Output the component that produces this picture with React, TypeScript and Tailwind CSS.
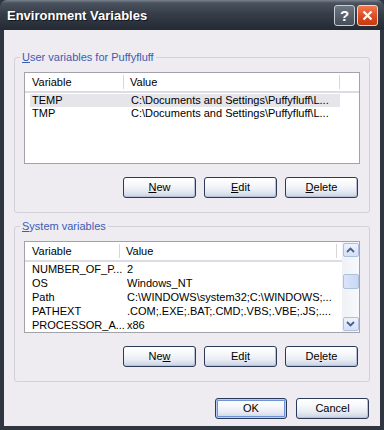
import React from "react";

function Btn({ children, def }: { children: React.ReactNode; def?: boolean }) {
  return (
    <div
      className={
        "h-[21px] rounded-[3px] border border-[#2c3a58] bg-[linear-gradient(to_bottom,#ffffff_0%,#f7f8fb_35%,#e6eaf2_70%,#c8d2e4_100%)] flex items-center justify-center text-[11px] leading-none text-black " +
        (def
          ? "w-[72px] shadow-[inset_0_0_0_1px_#b6cdf2,inset_0_0_0_2px_#6e93db]"
          : "w-[73px] shadow-[inset_-1px_-1px_0_0_#b8c2d6]")
      }
    >
      {children}
    </div>
  );
}

function Legend({ children }: { children: React.ReactNode }) {
  return (
    <legend className="ml-[-4px] px-[2px] text-[11px] leading-[14px] text-[#3c5bb5]">
      {children}
    </legend>
  );
}

function HeaderSep() {
  return <div className="w-[2px] h-[14px] border-l border-[#d6d6da] bg-white self-center" />;
}

function Chevron({ up }: { up?: boolean }) {
  return (
    <svg width="9" height="6" viewBox="0 0 9 6">
      <path
        d={up ? "M1 5 L4.5 1.5 L8 5" : "M1 1 L4.5 4.5 L8 1"}
        fill="none"
        stroke="#4c5f86"
        strokeWidth="1.8"
      />
    </svg>
  );
}

function ScrollBtn({ up }: { up?: boolean }) {
  return (
    <div className="h-[14px] w-[16px] rounded-[2px] border border-[#aebfdf] bg-[linear-gradient(to_bottom,#eef3fd,#d3e0f8)] flex items-center justify-center">
      <Chevron up={up} />
    </div>
  );
}

export default function App() {
  const sysRows: [string, string][] = [
    ["NUMBER_OF_P...", "2"],
    ["OS", "Windows_NT"],
    ["Path", "C:\\WINDOWS\\system32;C:\\WINDOWS;..."],
    ["PATHEXT", ".COM;.EXE;.BAT;.CMD;.VBS;.VBE;.JS;...."],
    ["PROCESSOR_A...", "x86"],
  ];
  return (
    <div className="w-[384px] h-[430px] bg-[#2f3640] flex flex-col font-['Liberation_Sans',Arial,sans-serif] overflow-hidden">
      {/* Title bar */}
      <div className="h-[30px] shrink-0 rounded-t-[7px] bg-[linear-gradient(to_bottom,#7a828e_0%,#4a525e_10%,#363e4a_45%,#2a313b_80%,#232a33_100%)] flex items-center pl-[7px] pr-[6px]">
        <div className="flex-1 text-white font-bold text-[13px] leading-none [text-shadow:1px_1px_0_#12161c]">
          Environment Variables
        </div>
        <div className="flex gap-[2px]">
          <div className="w-[21px] h-[21px] rounded-[3px] border border-[#c9ced6] bg-[linear-gradient(to_bottom,#6e7682,#454d59)] flex items-center justify-center text-white font-bold text-[15px] leading-none">
            ?
          </div>
          <div className="w-[21px] h-[21px] rounded-[3px] border border-[#e8d6d0] bg-[linear-gradient(to_bottom,#ee7a52,#d8491f_60%,#c53a14)] flex items-center justify-center">
            <svg width="11" height="11" viewBox="0 0 11 11">
              <path d="M1.5 1.5 L9.5 9.5 M9.5 1.5 L1.5 9.5" stroke="white" strokeWidth="2.2" />
            </svg>
          </div>
        </div>
      </div>

      {/* Body */}
      <div className="flex-1 mx-[4px] mb-[4px] bg-[#eeecf0] flex flex-col text-[11px] text-black">
        {/* User variables */}
        <fieldset className="mx-[10px] mt-[20px] border border-[#d2d0d8] rounded-[3px] px-[9px] pb-[14px]">
          <Legend>
            <span className="underline">U</span>ser variables for Puffyfluff
          </Legend>
          <div className="mt-[8px] h-[92px] border border-[#a2a2aa] bg-white flex flex-col">
            <div className="h-[20px] shrink-0 flex items-stretch border-b-[2px] border-[#dcdce2]">
              <div className="w-[98px] pl-[7px] flex items-center">Variable</div>
              <HeaderSep />
              <div className="w-[214px] pl-[5px] flex items-center">Value</div>
              <HeaderSep />
            </div>
            <div className="pt-[1px] flex flex-col">
              <div className="ml-[5px] w-[310px] h-[13px] bg-[#e6e5ea] flex items-center">
                <div className="w-[94px] pl-[2px]">TEMP</div>
                <div className="pl-[7px] whitespace-nowrap">C:\Documents and Settings\Puffyfluff\L...</div>
              </div>
              <div className="ml-[5px] w-[310px] h-[13px] flex items-center">
                <div className="w-[94px] pl-[2px]">TMP</div>
                <div className="pl-[7px] whitespace-nowrap">C:\Documents and Settings\Puffyfluff\L...</div>
              </div>
            </div>
          </div>
          <div className="mt-[13px] flex justify-end gap-[8px] pr-[2px]">
            <Btn>
              <span className="underline">N</span>ew
            </Btn>
            <Btn>
              <span className="underline">E</span>dit
            </Btn>
            <Btn>
              <span className="underline">D</span>elete
            </Btn>
          </div>
        </fieldset>

        {/* System variables */}
        <fieldset className="mx-[10px] mt-[6px] border border-[#d2d0d8] rounded-[3px] px-[9px] pb-[14px]">
          <Legend>
            <span className="underline">S</span>ystem variables
          </Legend>
          <div className="mt-[8px] h-[92px] border border-[#a2a2aa] bg-white flex">
            <div className="flex-1 flex flex-col">
              <div className="h-[20px] shrink-0 flex items-stretch border-b-[2px] border-[#dcdce2]">
                <div className="w-[94px] pl-[7px] flex items-center">Variable</div>
                <HeaderSep />
                <div className="w-[215px] pl-[5px] flex items-center">Value</div>
                <HeaderSep />
              </div>
              <div className="flex flex-col">
                {sysRows.map(([k, v]) => (
                  <div key={k} className="ml-[5px] h-[14px] flex items-center">
                    <div className="w-[90px] pl-[2px] whitespace-nowrap">{k}</div>
                    <div className="pl-[7px] whitespace-nowrap">{v}</div>
                  </div>
                ))}
              </div>
            </div>
            <div className="w-[17px] shrink-0 bg-[linear-gradient(to_right,#f0f1f6,#f8f9fc)] flex flex-col items-center pt-[1px] pb-[1px]">
              <ScrollBtn up />
              <div className="mt-[17px] h-[15px] w-[16px] rounded-[2px] border border-[#aebfdf] bg-[linear-gradient(to_right,#dbe5f9,#c9d8f4)]" />
              <div className="flex-1" />
              <ScrollBtn />
            </div>
          </div>
          <div className="mt-[13px] flex justify-end gap-[8px] pr-[2px]">
            <Btn>
              Ne<span className="underline">w</span>
            </Btn>
            <Btn>
              Ed<span className="underline">i</span>t
            </Btn>
            <Btn>
              De<span className="underline">l</span>ete
            </Btn>
          </div>
        </fieldset>

        <div className="mt-[16px] flex justify-end gap-[9px] pr-[11px]">
          <Btn def>OK</Btn>
          <Btn def={false}>Cancel</Btn>
        </div>
      </div>
    </div>
  );
}
